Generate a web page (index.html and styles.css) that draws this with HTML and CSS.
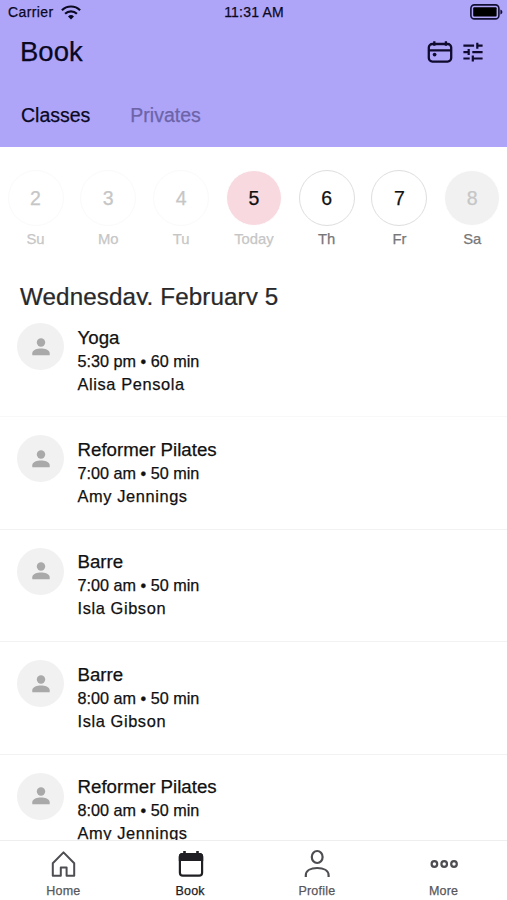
FILE: index.html
```html
<!DOCTYPE html>
<html lang="en">
<head>
    <meta charset="UTF-8">
    <meta name="viewport" content="width=device-width, initial-scale=1.0">
    <title>Book</title>
    <link rel="stylesheet" href="styles.css">
</head>
<body>
    <svg class="sprite" aria-hidden="true">
        <symbol id="person" viewBox="0 0 18 18">
            <circle cx="9" cy="4.5" r="4.2"/>
            <path d="M0.3 17.2v-2C0.3 12 5.5 10.6 9 10.6s8.700 1.400 8.700 4.600v2z"/>
        </symbol>
    </svg>

    <div class="app">
        <header class="header">
            <div class="status-bar">
                <div class="carrier">
                    <span>Carrier</span>
                    <svg class="wifi" viewBox="0 0 20 15" fill="none" stroke="#0b0822" stroke-width="2.200">
                        <path d="M0.900 5.200a13 13 0 0 1 18.200 0"/>
                        <path d="M4.100 8.700a8.400 8.400 0 0 1 11.800 0"/>
                        <path d="M10 14.600l-3-3.100a4.300 4.300 0 0 1 6 0z" fill="#0b0822" stroke="none"/>
                    </svg>
                </div>
                <div class="time">11:31 AM</div>
                <svg class="battery" viewBox="0 0 33 16">
                    <rect x="0.900" y="0.900" width="28" height="14" rx="3.500" fill="none" stroke="#120e33" stroke-width="1.600"/>
                    <rect x="3.200" y="3.300" width="23.400" height="9.200" rx="1" fill="#000"/>
                    <path d="M30.400 5.500c2.600 0.800 2.600 4.200 0 5z" fill="#120e33"/>
                </svg>
            </div>
            <div class="title-row">
                <h1>Book</h1>
                <div class="actions">
                    <svg class="icon-calendar" viewBox="0 0 26 24" fill="none" stroke="#100b2e" stroke-width="2.300">
                        <rect x="1.800" y="4" width="22.400" height="17.600" rx="3.600"/>
                        <path d="M2 10.300h22M7.300 1.300v4.500M18.900 1.300v4.500"/>
                        <circle cx="7.600" cy="14.600" r="1.900" fill="#100b2e" stroke="none"/>
                    </svg>
                    <svg class="icon-filter" viewBox="0 0 20 20" fill="none" stroke="#100b2e" stroke-width="2.200">
                        <path d="M0.400 3.700h10.700M14.300 0.700v6M14.300 3.700h5.300M0.400 10.100h5.300M5.700 7.100v6M9.300 10.100h10.300M0.400 16.500h6.300M9.800 13.500v6M9.800 16.500h9.800"/>
                    </svg>
                </div>
            </div>
            <nav class="tabs">
                <a class="tab active">Classes</a>
                <a class="tab">Privates</a>
            </nav>
        </header>

        <section class="week">
            <div class="day past"><div class="num">2</div><span>Su</span></div>
            <div class="day past"><div class="num">3</div><span>Mo</span></div>
            <div class="day past"><div class="num">4</div><span>Tu</span></div>
            <div class="day today"><div class="num">5</div><span>Today</span></div>
            <div class="day"><div class="num">6</div><span>Th</span></div>
            <div class="day"><div class="num">7</div><span>Fr</span></div>
            <div class="day closed"><div class="num">8</div><span>Sa</span></div>
        </section>

        <h2 class="date">Wednesday, February 5</h2>

        <main class="class-list">
            <div class="class-item">
                <div class="avatar"><svg><use href="#person"/></svg></div>
                <div class="info">
                    <h3>Yoga</h3>
                    <p class="when">5:30 pm • 60 min</p>
                    <p class="teacher">Alisa Pensola</p>
                </div>
            </div>
            <div class="class-item">
                <div class="avatar"><svg><use href="#person"/></svg></div>
                <div class="info">
                    <h3>Reformer Pilates</h3>
                    <p class="when">7:00 am • 50 min</p>
                    <p class="teacher">Amy Jennings</p>
                </div>
            </div>
            <div class="class-item">
                <div class="avatar"><svg><use href="#person"/></svg></div>
                <div class="info">
                    <h3>Barre</h3>
                    <p class="when">7:00 am • 50 min</p>
                    <p class="teacher">Isla Gibson</p>
                </div>
            </div>
            <div class="class-item">
                <div class="avatar"><svg><use href="#person"/></svg></div>
                <div class="info">
                    <h3>Barre</h3>
                    <p class="when">8:00 am • 50 min</p>
                    <p class="teacher">Isla Gibson</p>
                </div>
            </div>
            <div class="class-item">
                <div class="avatar"><svg><use href="#person"/></svg></div>
                <div class="info">
                    <h3>Reformer Pilates</h3>
                    <p class="when">8:00 am • 50 min</p>
                    <p class="teacher">Amy Jennings</p>
                </div>
            </div>
        </main>

        <nav class="bottom-nav">
            <a class="nav-item">
                <svg viewBox="0 0 28 30" fill="none" stroke="#4d4d52" stroke-width="2" stroke-linejoin="round">
                    <path d="M3.800 14.200L14.500 3.400l10.700 10.800V26.800h-7.600v-8.200h-5.800v8.200H3.800z"/>
                </svg>
                <span>Home</span>
            </a>
            <a class="nav-item active">
                <svg viewBox="0 0 28 30">
                    <rect x="3.900" y="5" width="22.200" height="21.700" rx="3" fill="none" stroke="#202024" stroke-width="2.200"/>
                    <path d="M2.800 12V7.500a3.500 3.500 0 0 1 3.500-3.500h17.400a3.500 3.500 0 0 1 3.500 3.500V12zM7.200 2h2.600v3H7.200zM20.200 2h2.600v3h-2.600z" fill="#202024"/>
                </svg>
                <span>Book</span>
            </a>
            <a class="nav-item">
                <svg viewBox="0 0 28 30" fill="none" stroke="#4d4d52" stroke-width="2.200">
                    <ellipse cx="14.200" cy="8" rx="5.400" ry="6"/>
                    <path d="M2.800 28v-1.500C2.800 21.500 7.900 19 14.200 19s11.400 2.500 11.400 7.500V28"/>
                </svg>
                <span>Profile</span>
            </a>
            <a class="nav-item">
                <svg viewBox="0 0 28 30" fill="none" stroke="#4d4d52" stroke-width="2.200">
                    <circle cx="4.400" cy="15" r="2.800"/>
                    <circle cx="14.200" cy="15" r="2.800"/>
                    <circle cx="24" cy="15" r="2.800"/>
                </svg>
                <span>More</span>
            </a>
        </nav>
    </div>
</body>
</html>
```
FILE: styles.css
```css
* {
    box-sizing: border-box;
}
body {
    margin: 0;
    font-family: "Liberation Sans", Arial, sans-serif;
    color: #111;
    background: #fff;
    -webkit-text-stroke: 0.25px currentColor;
}
h1, h2, h3, p {
    margin: 0;
    font-weight: normal;
}
.sprite {
    display: none;
}
.app {
    height: 900px;
    display: flex;
    flex-direction: column;
    overflow: hidden;
}
.header {
    height: 147px;
    flex: none;
    background: #aea5f9;
    color: #0b0822;
}
.status-bar {
    height: 24px;
    display: grid;
    grid-template-columns: 1fr auto 1fr;
    align-items: center;
    padding: 0 4px 0 8px;
    font-size: 14px;
}
.carrier {
    display: flex;
    align-items: center;
    gap: 7px;
    letter-spacing: 0.4px;
}
.wifi {
    width: 20px;
    height: 15px;
}
.time {
    letter-spacing: 0.2px;
    margin-right: 3px;
}
.battery {
    width: 33px;
    height: 16px;
    justify-self: end;
}
.title-row {
    height: 56px;
    display: flex;
    justify-content: space-between;
    align-items: center;
    padding: 0 24px 0 20px;
}
h1 {
    font-size: 27.5px;
}
.actions {
    display: flex;
    align-items: center;
    gap: 10px;
}
.icon-calendar {
    width: 26px;
    height: 24px;
}
.icon-filter {
    width: 20px;
    height: 20px;
}
.tabs {
    display: flex;
    gap: 40px;
    padding: 23px 21px 0;
    font-size: 19.5px;
    line-height: 24px;
}
.tab {
    color: #6c63a8;
}
.tab.active {
    color: #0b0822;
}
.week {
    flex: none;
    display: flex;
    gap: 16.8px;
    height: 133px;
    padding: 23px 0 0 7.5px;
}
.day {
    width: 56px;
    flex: none;
    text-align: center;
    font-size: 14.8px;
    line-height: 18px;
    color: #777;
}
.num {
    height: 56px;
    margin-bottom: 4px;
    border: 1px solid #dedede;
    border-radius: 50%;
    font-size: 19.5px;
    line-height: 54px;
    color: #111;
}
.past, .today {
    color: #c6c6c6;
}
.past .num {
    color: #c6c6c6;
    border-color: #fafafa;
}
.today .num {
    background: #f8d9e0;
    border-color: #fff;
}
.closed .num {
    color: #c6c6c6;
    background: #f1f1f1;
    border-color: #fff;
}
.date {
    flex: none;
    height: 25px;
    padding-left: 20px;
    overflow: hidden;
    font-size: 24.2px;
    line-height: 33px;
    letter-spacing: 0.12px;
    color: #29292b;
}
.class-list {
    flex: 1;
    min-height: 0;
    overflow: hidden;
}
.class-item {
    display: flex;
    gap: 14px;
    height: 112.4px;
    padding: 18px 17px 0;
    border-bottom: 1px solid #f2f2f2;
}
.class-item:first-child {
    border-color: #f8f8f8;
}
.avatar {
    width: 47px;
    height: 47px;
    flex: none;
    display: flex;
    align-items: center;
    justify-content: center;
    border-radius: 50%;
    background: #f1f1f1;
}
.avatar svg {
    width: 18px;
    height: 18px;
    fill: #a9a9a9;
}
.info {
    margin-left: -0.5px;
}
h3 {
    padding-top: 2.5px;
    font-size: 18.7px;
    line-height: 24px;
}
.when {
    font-size: 16.2px;
    line-height: 23px;
}
.teacher {
    font-size: 16.4px;
    line-height: 22.5px;
    letter-spacing: 0.6px;
}
.bottom-nav {
    flex: none;
    height: 60px;
    display: flex;
    border-top: 1px solid #eee;
    background: #fff;
}
.nav-item {
    flex: 1;
    display: flex;
    flex-direction: column;
    align-items: center;
    padding-top: 8px;
    font-size: 12.5px;
    line-height: 16px;
    letter-spacing: 0.2px;
    color: #57575b;
}
.nav-item svg {
    width: 28px;
    height: 30px;
    margin-bottom: 4px;
}
.nav-item.active {
    color: #202024;
}
```
